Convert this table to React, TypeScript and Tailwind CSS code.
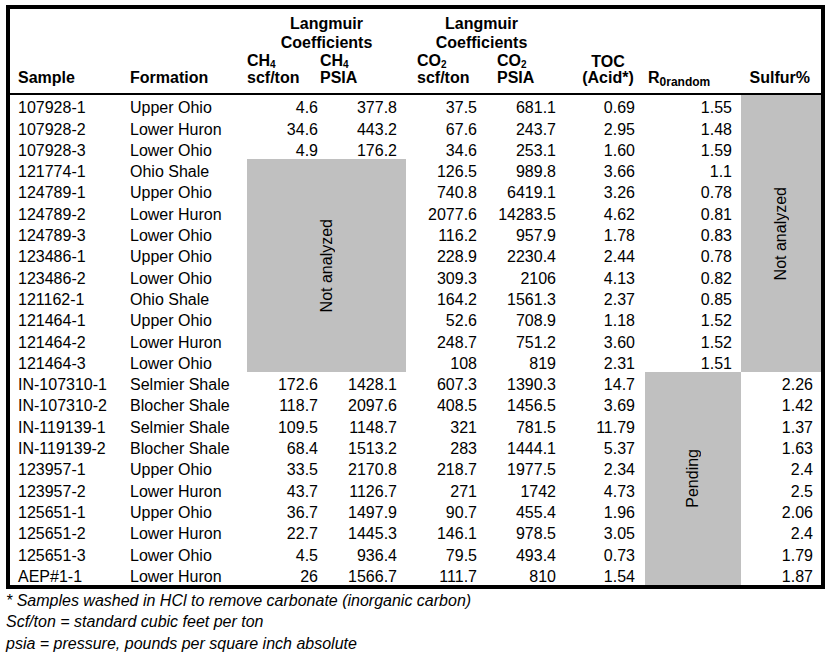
const cols = "grid-cols-[116px_121px_73px_86px_84px_75px_80px_96px_80px]";

type Row = (string | null)[];

// null = cell covered by a grey block
const rows: Row[] = [
  ["107928-1", "Upper Ohio", "4.6", "377.8", "37.5", "681.1", "0.69", "1.55", null],
  ["107928-2", "Lower Huron", "34.6", "443.2", "67.6", "243.7", "2.95", "1.48", null],
  ["107928-3", "Lower Ohio", "4.9", "176.2", "34.6", "253.1", "1.60", "1.59", null],
  ["121774-1", "Ohio Shale", null, null, "126.5", "989.8", "3.66", "1.1", null],
  ["124789-1", "Upper Ohio", null, null, "740.8", "6419.1", "3.26", "0.78", null],
  ["124789-2", "Lower Huron", null, null, "2077.6", "14283.5", "4.62", "0.81", null],
  ["124789-3", "Lower Ohio", null, null, "116.2", "957.9", "1.78", "0.83", null],
  ["123486-1", "Upper Ohio", null, null, "228.9", "2230.4", "2.44", "0.78", null],
  ["123486-2", "Lower Ohio", null, null, "309.3", "2106", "4.13", "0.82", null],
  ["121162-1", "Ohio Shale", null, null, "164.2", "1561.3", "2.37", "0.85", null],
  ["121464-1", "Upper Ohio", null, null, "52.6", "708.9", "1.18", "1.52", null],
  ["121464-2", "Lower Huron", null, null, "248.7", "751.2", "3.60", "1.52", null],
  ["121464-3", "Lower Ohio", null, null, "108", "819", "2.31", "1.51", null],
  ["IN-107310-1", "Selmier Shale", "172.6", "1428.1", "607.3", "1390.3", "14.7", null, "2.26"],
  ["IN-107310-2", "Blocher Shale", "118.7", "2097.6", "408.5", "1456.5", "3.69", null, "1.42"],
  ["IN-119139-1", "Selmier Shale", "109.5", "1148.7", "321", "781.5", "11.79", null, "1.37"],
  ["IN-119139-2", "Blocher Shale", "68.4", "1513.2", "283", "1444.1", "5.37", null, "1.63"],
  ["123957-1", "Upper Ohio", "33.5", "2170.8", "218.7", "1977.5", "2.34", null, "2.4"],
  ["123957-2", "Lower Huron", "43.7", "1126.7", "271", "1742", "4.73", null, "2.5"],
  ["125651-1", "Upper Ohio", "36.7", "1497.9", "90.7", "455.4", "1.96", null, "2.06"],
  ["125651-2", "Lower Huron", "22.7", "1445.3", "146.1", "978.5", "3.05", null, "2.4"],
  ["125651-3", "Lower Ohio", "4.5", "936.4", "79.5", "493.4", "0.73", null, "1.79"],
  ["AEP#1-1", "Lower Huron", "26", "1566.7", "111.7", "810", "1.54", null, "1.87"],
];

const cellPad = [
  "pl-[8px]",
  "pl-[4px]",
  "justify-end pr-[2px]",
  "justify-end pr-[9px]",
  "justify-end pr-[13px]",
  "justify-end pr-[9px]",
  "justify-end pr-[10px]",
  "justify-end pr-[9px]",
  "justify-end pr-[8px]",
];

function GreyBlock({ className, label }: { className: string; label: string }) {
  return (
    <div className={`flex items-center justify-center bg-[#c0c0c0] ${className}`}>
      <span className="rotate-180 [writing-mode:vertical-rl] leading-none">{label}</span>
    </div>
  );
}

function Sub({ children }: { children: React.ReactNode }) {
  return <sub className="bottom-[-2px] text-[10px]">{children}</sub>;
}

export default function App() {
  return (
    <div className="min-h-[658px] bg-white font-['Liberation_Sans',Arial,sans-serif] text-[16px] text-black">
      <div className="ml-[6px] mt-[5px] w-[819px] border-4 border-black">
        {/* header */}
        <div className={`grid ${cols} grid-rows-[44px_40px] border-b-2 border-black font-bold`}>
          <div className="col-[3/span_2] row-start-1 pt-[5px] text-center leading-[19px]">
            Langmuir
            <br />
            Coefficients
          </div>
          <div className="col-[5/span_2] row-start-1 pt-[5px] pr-[8px] text-center leading-[19px]">
            Langmuir
            <br />
            Coefficients
          </div>
          <div className="col-start-1 row-start-2 flex items-end pb-[7px] pl-[8px] leading-[16px]">Sample</div>
          <div className="col-start-2 row-start-2 flex items-end pb-[7px] pl-[4px] leading-[16px]">Formation</div>
          <div className="col-start-3 row-start-2 flex flex-col justify-end gap-[1px] pb-[7px] leading-[16px]">
            <span>
              CH<Sub>4</Sub>
            </span>
            <span>scf/ton</span>
          </div>
          <div className="col-start-4 row-start-2 flex flex-col justify-end gap-[1px] pb-[7px] leading-[16px]">
            <span>
              CH<Sub>4</Sub>
            </span>
            <span>PSIA</span>
          </div>
          <div className="col-start-5 row-start-2 flex flex-col justify-end gap-[1px] pb-[7px] pl-[11px] leading-[16px]">
            <span>
              CO<Sub>2</Sub>
            </span>
            <span>scf/ton</span>
          </div>
          <div className="col-start-6 row-start-2 flex flex-col justify-end gap-[1px] pb-[7px] pl-[7px] leading-[16px]">
            <span>
              CO<Sub>2</Sub>
            </span>
            <span>PSIA</span>
          </div>
          <div className="col-start-7 row-start-2 flex flex-col items-center justify-end pb-[7px] pl-[6px] leading-[16px]">
            <span>TOC</span>
            <span>(Acid*)</span>
          </div>
          <div className="col-start-8 row-start-2 flex items-end pb-[7px] pl-[3px] leading-[16px]">
            <span>
              R<sub className="bottom-[-3px] text-[12px]">0random</sub>
            </span>
          </div>
          <div className="col-start-9 row-start-2 flex items-end justify-end pb-[7px] pr-[11px] leading-[16px]">
            Sulfur%
          </div>
        </div>

        {/* body */}
        <div className={`grid ${cols} auto-rows-[21.3px]`}>
          <GreyBlock className="col-[3/span_2] row-[4/span_10]" label="Not analyzed" />
          <GreyBlock className="col-[9/span_1] row-[1/span_13]" label="Not analyzed" />
          <GreyBlock className="col-[8/span_1] row-[14/span_10]" label="Pending" />
          {rows.map((row, r) =>
            row.map((v, c) =>
              v === null ? null : (
                <div key={`${r}-${c}`} className={`flex items-end leading-[16px] whitespace-nowrap ${cellPad[c]}`}>
                  {v}
                </div>
              )
            )
          )}
        </div>
      </div>

      <div className="ml-[6px] pt-[1px] italic leading-[21.5px]">
        <div>* Samples washed in HCl to remove carbonate (inorganic carbon)</div>
        <div>Scf/ton = standard cubic feet per ton</div>
        <div>psia = pressure, pounds per square inch absolute</div>
      </div>
    </div>
  );
}
